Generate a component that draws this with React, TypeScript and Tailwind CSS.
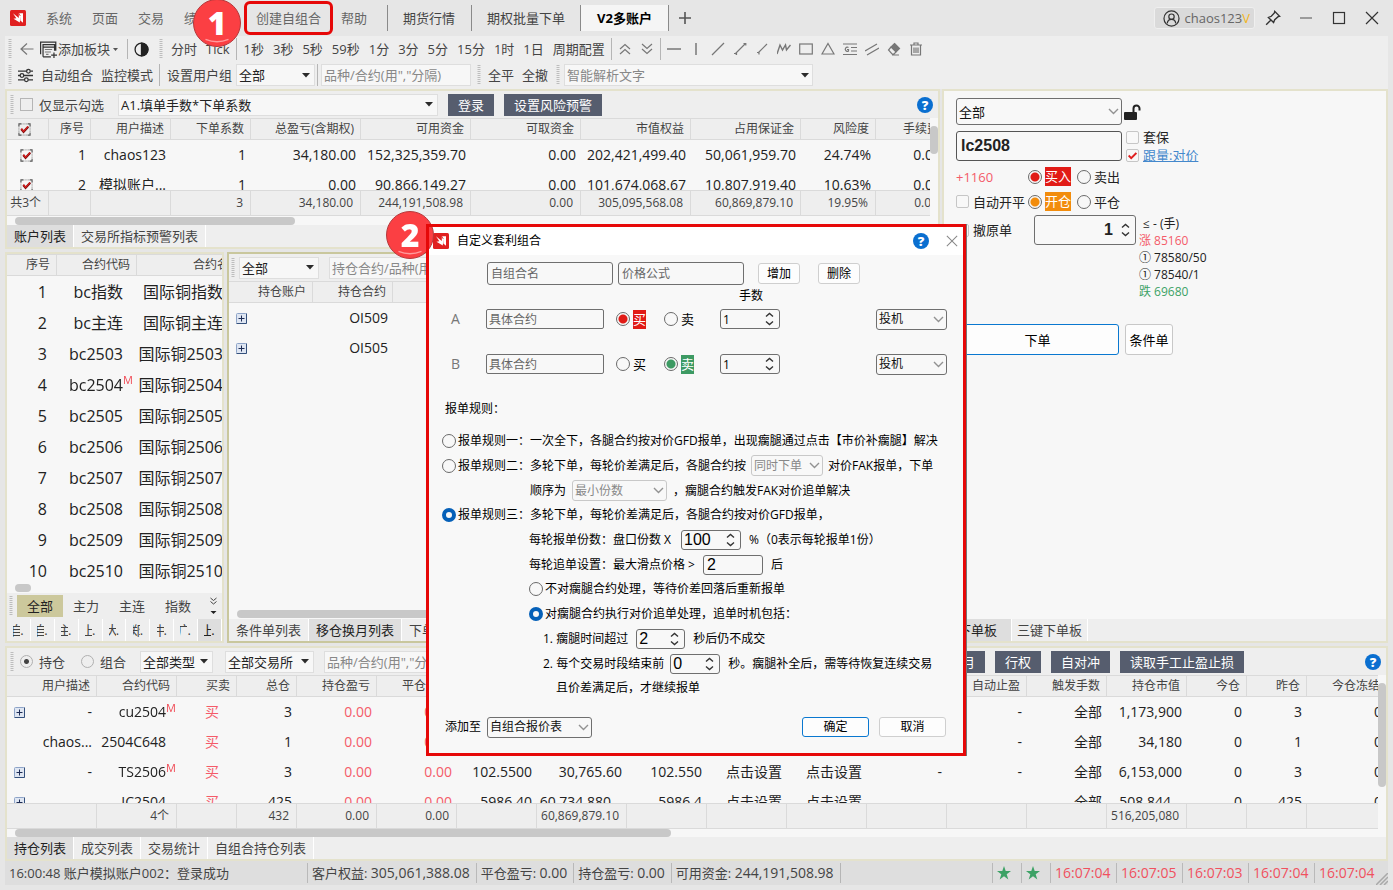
import type { ReactNode } from 'react'
import clsx from 'clsx'

/* ---------- small parts ---------- */

function Svg({ children, size = 14, className }: { children: ReactNode; size?: number; className?: string }) {
  return (
    <svg
      width={size}
      height={size}
      viewBox="0 0 14 14"
      fill="none"
      stroke="currentColor"
      strokeWidth="1.2"
      className={clsx('shrink-0', className)}
      aria-hidden="true"
    >
      {children}
    </svg>
  )
}

const Grip = () => (
  <svg width="4" height="20" viewBox="0 0 4 20" className="shrink-0" aria-hidden="true">
    <path d="M2 0V20" stroke="#bdbdbd" strokeWidth="3" strokeDasharray="1 1" />
  </svg>
)

const Sep = ({ className = 'h-[22px]' }: { className?: string }) => <span className={clsx('w-px shrink-0 bg-[#b5b5b5]', className)} />

const Caret = () => (
  <svg width="8" height="5" viewBox="0 0 8 5" className="pointer-events-none shrink-0" aria-hidden="true">
    <path d="M0 0H8L4 4.5Z" fill="#2b2b2b" />
  </svg>
)

const Logo = () => (
  <svg width="16" height="16" viewBox="0 0 16 16" className="shrink-0" aria-hidden="true">
    <rect width="16" height="16" rx="1.5" fill="#e02020" />
    <path d="M3 3.200L8.800 8V3.200H13V12.800L10.300 10.500V6L9.800 12.500L3.500 8.800L6.300 8.200Z" fill="#fff" />
    <path d="M8.800 3.200L10.300 6" stroke="#e02020" strokeWidth="0.8" />
  </svg>
)

const Help = () => (
  <button aria-label="帮助" className="flex h-4 w-4 shrink-0 items-center justify-center rounded-full bg-[#0a6fd0] text-[13px] leading-4 font-extrabold text-white">
    ?
  </button>
)

const PlusBox = () => (
  <svg width="11" height="11" viewBox="0 0 11 11" aria-hidden="true">
    <rect x="0.5" y="0.5" width="10" height="10" rx="1" fill="#dfe6f2" stroke="#8ea4c8" />
    <path d="M0.5 10.5H10.5V0.5" fill="none" stroke="#34507c" />
    <path d="M2.5 5.5H8.5M5.5 2.5V8.5" stroke="#1d2c55" />
  </svg>
)

interface ComboProps {
  label: string
  value: string
  className?: string
}

function Combo({ label, value, className }: ComboProps) {
  return (
    <div className={clsx('flex h-[22px] shrink-0 items-center border border-[#dedede] bg-[#f7f7f7] pr-1 text-[#222]', className)}>
      <select aria-label={label} className="h-full min-w-0 flex-1 appearance-none bg-transparent pl-0.5">
        <option>{value}</option>
      </select>
      <Caret />
    </div>
  )
}

function RoundCombo({ label, value, className, muted }: ComboProps & { muted?: boolean }) {
  return (
    <div
      className={clsx(
        'flex shrink-0 items-center rounded-[3px] border bg-[#f8f8f8] pr-0.5',
        muted ? 'border-[#c8c8c8] text-[#888]' : 'border-[#6f6f6f] text-[#111]',
        className,
      )}
    >
      <select aria-label={label} disabled={muted} className="h-full min-w-0 flex-1 appearance-none bg-transparent pl-0.5 opacity-100">
        <option>{value}</option>
      </select>
      <svg width="11" height="7" viewBox="0 0 11 7" className="pointer-events-none shrink-0" aria-hidden="true">
        <path d="M1 1L5.500 5.500L10 1" fill="none" stroke="#929292" strokeWidth="1.4" />
      </svg>
    </div>
  )
}

function Spin({ label, value, className, inputClass }: ComboProps & { inputClass?: string }) {
  return (
    <div className={clsx('flex shrink-0 items-center rounded-[3px] border border-[#6f6f6f] bg-[#f8f8f8]', className)}>
      <input aria-label={label} defaultValue={value} className={clsx('h-full min-w-0 flex-1 bg-transparent pl-0.5', inputClass)} />
      <svg width="9" height="14" viewBox="0 0 9 14" className="mr-[5px] shrink-0" aria-hidden="true">
        <path d="M1 4.500L4.500 1.500L8 4.500M1 9.500L4.500 12.500L8 9.500" fill="none" stroke="#333" strokeWidth="1.4" />
      </svg>
    </div>
  )
}

const radioDots = {
  red: 'checked:bg-[radial-gradient(circle,#e11b16_0_4px,transparent_5px)]',
  green: 'checked:bg-[radial-gradient(circle,#3d9a63_0_4px,transparent_5px)]',
  orange: 'checked:bg-[radial-gradient(circle,#f28c0c_0_4px,transparent_5px)]',
  gray: 'checked:bg-[radial-gradient(circle,#444_0_2px,transparent_3px)]',
  blue: 'checked:border-4 checked:border-[#0560b8]',
}

interface RadioProps {
  name: string
  children: ReactNode
  tone?: keyof typeof radioDots
  checked?: boolean
  soft?: boolean
  className?: string
}

function Radio({ name, children, tone = 'blue', checked, soft, className = 'gap-0.5' }: RadioProps) {
  return (
    <label className={clsx('flex shrink-0 items-center', className)}>
      <input
        type="radio"
        name={name}
        defaultChecked={checked}
        className={clsx('shrink-0 appearance-none rounded-full border', soft ? 'h-[13px] w-[13px] border-[#b0b0b0]' : 'h-3.5 w-3.5 border-[#6a6a6a]', radioDots[tone])}
      />
      {children}
    </label>
  )
}

function Check({ children, checked, className }: { children: ReactNode; checked?: boolean; className?: string }) {
  return (
    <label className={clsx('flex shrink-0 items-center gap-1', className)}>
      <span className="grid place-items-center">
        <input type="checkbox" defaultChecked={checked} className="col-start-1 row-start-1 h-[13px] w-[13px] appearance-none rounded-[2px] border border-[#c6c6c6] bg-[#f8f8f8]" />
        {checked && (
          <Svg size={9} className="pointer-events-none col-start-1 row-start-1 text-[#e02020]">
            <path d="M1 7L5 11L13 3" strokeWidth="3" />
          </Svg>
        )}
      </span>
      {children}
    </label>
  )
}

function RowCheck({ label }: { label: string }) {
  return (
    <span className="grid h-[13px] place-items-center">
      <input type="checkbox" aria-label={label} defaultChecked className="col-start-1 row-start-1 h-[13px] w-[13px] appearance-none" />
      <Svg size={13} className="pointer-events-none col-start-1 row-start-1 text-[#555]">
        <path d="M1 3.500V1H3.500M10.500 1H13V3.500M13 10.500V13H10.500M3.500 13H1V10.500" />
        <path d="M3 1H11M3 13H11M1 3V11M13 3V11" strokeDasharray="1 1" strokeWidth="0.8" />
        <path d="M3.500 6.500L6 9.500L11 4" stroke="#7a0d0d" strokeWidth="2.4" />
        <path d="M3.500 6L6 9L11 3.500" stroke="#e02020" strokeWidth="1.200" />
      </Svg>
    </span>
  )
}

const DarkButton = ({ children }: { children: ReactNode }) => (
  <button className="h-[22px] shrink-0 bg-[#565d6e] px-2.5 text-white">{children}</button>
)

function Tabs({ items, active }: { items: string[]; active: number }) {
  return (
    <div className="flex h-[22px] shrink-0 overflow-hidden bg-[#eeeeee]">
      {items.map((t, i) => (
        <button key={t} className={clsx('shrink-0 border-r border-white px-[7px]', i === active ? 'bg-[#dedede] text-[#222]' : 'text-[#444]')}>
          {t}
        </button>
      ))}
    </div>
  )
}

/* ---------- data grid ---------- */

interface Column {
  title: string
  width: number
  cell?: string
}

interface GridProps {
  cols: Column[]
  rows: ReactNode[][]
  foot?: string[]
  rowClass?: string
}

function Grid({ cols, rows, foot, rowClass = 'h-[30px] text-sm' }: GridProps) {
  const total = cols.reduce((sum, c) => sum + c.width, 0)
  return (
    <div className="min-w-0 flex-1 overflow-hidden">
      <table className="table-fixed border-separate border-spacing-0 whitespace-nowrap" style={{ width: total }}>
        <colgroup>
          {cols.map((c, i) => (
            <col key={i} style={{ width: c.width }} />
          ))}
        </colgroup>
        <thead className="sticky top-0 text-xs text-[#444]">
          <tr className="h-[22px]">
            {cols.map((c, i) => (
              <th key={i} className="border-y border-r border-[#dadada] bg-[#eeeeee] p-0 pr-1.5 text-right leading-4 font-normal">
                {c.title === '☑' ? <RowCheck label="全选" /> : c.title}
              </th>
            ))}
          </tr>
        </thead>
        <tbody className="text-[#222]">
          {rows.map((r, i) => (
            <tr key={i} className={rowClass}>
              {r.map((v, j) => (
                <td key={j} className={clsx('p-0 text-right leading-5', cols[j].cell ?? 'pr-[5px]')}>
                  {v}
                </td>
              ))}
            </tr>
          ))}
        </tbody>
        {foot && (
          <tfoot className="sticky bottom-0 text-xs text-[#444]">
            <tr className="h-[26px]">
              {foot.map((v, i) => (
                <td key={i} className="border-y border-r border-[#dadada] bg-[#eeeeee] p-0 pr-[7px] text-right leading-4">
                  {v}
                </td>
              ))}
            </tr>
          </tfoot>
        )}
      </table>
    </div>
  )
}

const Main = ({ children }: { children: string }) => (
  <span className="relative">
    {children}
    <sup className="absolute top-0 left-full text-[11px] leading-3 text-[#f04a55]">M</sup>
  </span>
)

const Red = ({ children }: { children: string }) => <span className="text-[#f45b69]">{children}</span>

const accountCols: Column[] = [
  { title: '☑', width: 42, cell: 'pr-1' },
  { title: '序号', width: 42 },
  { title: '用户描述', width: 80 },
  { title: '下单系数', width: 80 },
  { title: '总盈亏(含期权)', width: 110 },
  { title: '可用资金', width: 110 },
  { title: '可取资金', width: 110 },
  { title: '市值权益', width: 110 },
  { title: '占用保证金', width: 110 },
  { title: '风险度', width: 75 },
  { title: '手续费', width: 70 },
]

const accountRows: ReactNode[][] = [
  [<RowCheck label="chaos123" />, '1', 'chaos123', '1', '34,180.00', '152,325,359.70', '0.00', '202,421,499.40', '50,061,959.70', '24.74%', '0.00'],
  [<RowCheck label="模拟账户" />, '2', '模拟账户...', '1', '0.00', '90,866,149.27', '0.00', '101,674,068.67', '10,807,919.40', '10.63%', '0.00'],
]

const accountFoot = ['共3个', '', '', '3', '34,180.00', '244,191,508.98', '0.00', '305,095,568.08', '60,869,879.10', '19.95%', '0.00']

const contractCols: Column[] = [
  { title: '序号', width: 50, cell: 'pr-2.5' },
  { title: '合约代码', width: 80, cell: 'pr-3.5' },
  { title: '合约名称', width: 111, cell: 'pr-[25px]' },
]

const contractRows: ReactNode[][] = ['指数', '主连', '2503', '2504', '2505', '2506', '2507', '2508', '2509', '2510'].map((s, i) => [
  i + 1,
  s === '2504' ? <Main>{`bc${s}`}</Main> : `bc${s}`,
  `国际铜${s}`,
])

const moveCols: Column[] = [
  { title: '持仓账户', width: 84, cell: 'text-left pl-[7px]' },
  { title: '持仓合约', width: 80 },
  { title: '', width: 600 },
]

const positionCols: Column[] = [
  { title: '用户描述', width: 90 },
  { title: '合约代码', width: 80, cell: 'pr-[11px]' },
  { title: '买卖', width: 60, cell: 'pr-[18px]' },
  { title: '总仓', width: 60 },
  { title: '持仓盈亏', width: 80 },
  { title: '平仓盈亏', width: 80 },
  { title: '持仓均价', width: 80 },
  { title: '占用保证金', width: 90 },
  { title: '最新价', width: 80 },
  { title: '止损', width: 80 },
  { title: '止盈', width: 80 },
  { title: '自动止损', width: 80 },
  { title: '自动止盈', width: 80 },
  { title: '触发手数', width: 80 },
  { title: '持仓市值', width: 80 },
  { title: '今仓', width: 60 },
  { title: '昨仓', width: 60 },
  { title: '今仓冻结', width: 80 },
]

const Owner = ({ children, plus }: { children: string; plus?: boolean }) => (
  <span className="flex items-center justify-between pl-[7px]">
    <span>{plus && <PlusBox />}</span>
    <span>{children}</span>
  </span>
)

const buy = <Red>买</Red>
const zero = <Red>0.00</Red>
const setUp = '点击设置'

const positionRows: ReactNode[][] = [
  [<Owner plus>-</Owner>, <Main>cu2504</Main>, buy, '3', zero, zero, '', '', '', setUp, setUp, '-', '-', '全部', '1,173,900', '0', '3', '0'],
  [<Owner>chaos...</Owner>, '2504C648', buy, '1', zero, zero, '', '', '', setUp, setUp, '-', '-', '全部', '34,180', '0', '1', '0'],
  [<Owner plus>-</Owner>, <Main>TS2506</Main>, buy, '3', zero, zero, '102.5500', '30,765.60', '102.550', setUp, setUp, '-', '-', '全部', '6,153,000', '0', '3', '0'],
  [<Owner plus> </Owner>, 'IC2504', buy, '425', zero, zero, '5986.40', '60,734,880...', '5986.4', setUp, setUp, '', '', '全部', '508,844...', '0', '425', '0'],
]

const positionFoot = ['', '4个', '', '432', '0.00', '0.00', '', '60,869,879.10', '', '', '', '', '', '', '516,205,080', '', '', '']

/* ---------- title bar and toolbars ---------- */

function Badge({ children, className }: { children: string; className: string }) {
  return (
    <span
      className={clsx(
        'absolute flex h-12 w-12 items-center justify-center rounded-full border border-[#b5383b] bg-[#fb3f43] text-[32px] leading-none font-extrabold text-white',
        className,
      )}
    >
      {children}
      <svg viewBox="0 0 48 48" className="absolute inset-0" aria-hidden="true">
        <path d="M12 41Q24 46 36 41" fill="none" stroke="#ff9a9c" strokeWidth="1.5" />
      </svg>
    </span>
  )
}

function TitleBar() {
  return (
    <header className="relative flex h-9 shrink-0 items-center pr-[5px] pl-2.5 text-[#666]">
      <Logo />
      <nav className="flex items-center gap-5 pl-5 leading-5">
        <button>系统</button>
        <button>页面</button>
        <button>交易</button>
        <button className="w-[52px] text-left">绩</button>
        <button className="relative">
          创建自组合
          <span className="absolute -inset-x-3 -inset-y-[7px] rounded-md border-[3px] border-[#e60808]" />
        </button>
        <button>帮助</button>
      </nav>
      <div className="ml-5 flex h-[26px] text-[#444]">
        <button className="border-l border-[#8a8a8a] pr-4 pl-[15px]">期货行情</button>
        <button className="border-x border-[#8a8a8a] px-[15px]">期权批量下单</button>
        <button className="border-r border-[#8a8a8a] bg-[#f5f5f5] px-4 font-bold text-black">V2多账户</button>
        <button aria-label="新建页面" className="pl-[9px] text-[#555]">
          <Svg>
            <path d="M7 1V13M1 7H13" strokeWidth="1.6" />
          </Svg>
        </button>
      </div>
      <div className="ml-auto flex items-center text-[#333]">
        <button className="flex h-[22px] items-center gap-1 rounded-[3px] border border-[#efefef] bg-[#dadada] pr-1 pl-2 text-[#666]">
          <Svg size={17} className="text-[#333]">
            <circle cx="7" cy="7" r="6.200" strokeWidth="1" />
            <circle cx="7" cy="5.500" r="2.200" strokeWidth="1" />
            <path d="M3.500 11C3.800 8.800 5.300 7.800 7 7.800S10.200 8.800 10.500 11" strokeWidth="1" />
          </Svg>
          <span>
            chaos123<span className="text-[#f2b61c]">V</span>
          </span>
        </button>
        <button aria-label="置顶" className="ml-2.5">
          <Svg size={16}>
            <path d="M1 13L5 9M3 6.500L7.500 11L8.500 8.500L11.500 5.800L12.800 5.500L8.500 1.200L8.200 2.500L5.500 5.500Z" />
          </Svg>
        </button>
        <button aria-label="最小化" className="ml-[18px]">
          <Svg className="text-[#888]">
            <path d="M1 7H13" strokeWidth="1.600" />
          </Svg>
        </button>
        <button aria-label="最大化" className="ml-[19px]">
          <Svg>
            <rect x="1.500" y="1.500" width="11" height="11" />
          </Svg>
        </button>
        <button aria-label="关闭" className="mr-[9px] ml-[19px]">
          <Svg>
            <path d="M1 1L13 13M13 1L1 13" />
          </Svg>
        </button>
      </div>
      <Badge className="-top-px left-[193px]">1</Badge>
    </header>
  )
}

const drawTools: { name: string; icon: ReactNode }[] = [
  { name: '水平线', icon: <path d="M0 7H14" strokeWidth="1.500" /> },
  { name: '垂直线', icon: <path d="M7 1V13" strokeWidth="1.500" /> },
  { name: '直线', icon: <path d="M1 13L13 1" /> },
  { name: '线段', icon: <path d="M2 12L12 2M1 11.500H3.500V13M10.500 1.500H12.800V3.500" /> },
  { name: '射线', icon: <path d="M3 11L12 2M2 10.500H4V12.500" /> },
  { name: '波浪线', icon: <path d="M0 12L3 3L5.500 8L8.500 3L9.500 8L13.500 3" strokeWidth="1.400" /> },
  { name: '矩形', icon: <rect x="0.700" y="2" width="12.600" height="10" /> },
  { name: '三角形', icon: <path d="M7 1.500L13 12H1Z" /> },
  { name: '黄金分割', icon: <path d="M0 2H14M0 12.500H14M8 5.500H14M8 9H14M5.500 5.500A2 2.200 0 1 0 5.500 9V7.500H4" /> },
  { name: '平行线', icon: <path d="M0 9L12 2M2 13L14 6" /> },
  {
    name: '橡皮',
    icon: (
      <>
        <path d="M7.500 1.500L12.500 6.500L9 10L4 5Z" fill="currentColor" />
        <path d="M4 5L1.500 8L5 12H7L9 10M5 13H12" />
      </>
    ),
  },
  { name: '删除', icon: <path d="M1 3H13M5 3V1H9V3M2.500 3V13H11.500V3M5 5.500V11M7 5.500V11M9 5.500V11" /> },
]

function Toolbars() {
  return (
    <div className="mx-[5px] shrink-0 bg-[#eeeeee] pb-px pl-[3px] text-[#444]">
      <div className="flex h-[26px] items-center">
        <Grip />
        <button aria-label="返回" className="ml-2 text-[#777]">
          <Svg>
            <path d="M13.500 7H1M7 1.500L1 7L7 12.500" />
          </Svg>
        </button>
        <button className="ml-1.5 flex items-center">
          <Svg size={17} className="mr-[1px] text-[#333]">
            <path d="M0.500 11V1H13V8M2.500 13V3H12V8M2.500 5H12M2.500 13H9M11.500 9.500V14M9.200 11.700H14" strokeWidth="1" />
            <path d="M4 7H10M4 9H9M5 11H7" strokeWidth="0.900" stroke="#777" />
          </Svg>
          添加板块
          <svg width="5" height="3" viewBox="0 0 5 3" className="ml-[3px]" aria-hidden="true">
            <path d="M0 0H5L2.500 3Z" fill="#555" />
          </svg>
        </button>
        <Sep className="ml-[9px] h-5" />
        <button aria-label="配色" className="ml-1.5">
          <Svg size={15} className="text-[#222]">
            <circle cx="7" cy="7" r="6" />
            <path d="M7 1A6 6 0 0 1 7 13Z" fill="currentColor" />
          </Svg>
        </button>
        <span className="ml-2.5">
          <Grip />
        </span>
        <div className="ml-2 flex items-center gap-[9px]">
          <button>分时</button>
          <button>Tick</button>
        </div>
        <Sep className="ml-1.5 h-[22px]" />
        <div className="ml-[7px] flex items-center gap-[9px]">
          {['1秒', '3秒', '5秒', '59秒', '1分', '3分', '5分', '15分', '1时', '1日', '周期配置'].map((t) => (
            <button key={t}>{t}</button>
          ))}
        </div>
        <Sep className="ml-1.5 h-[22px]" />
        <div className="mx-0.5 flex text-[#777]">
          <button aria-label="向上" className="flex w-[22px] justify-center">
            <Svg>
              <path d="M2 7L7 2.500L12 7M2 12L7 7.500L12 12" />
            </Svg>
          </button>
          <button aria-label="向下" className="flex w-[22px] justify-center">
            <Svg>
              <path d="M2 2L7 6.500L12 2M2 7L7 11.500L12 7" />
            </Svg>
          </button>
        </div>
        <Sep />
        <div className="ml-0.5 flex text-[#777]">
          {drawTools.map((t) => (
            <button key={t.name} aria-label={t.name} className="flex w-[22px] justify-center">
              <Svg>{t.icon}</Svg>
            </button>
          ))}
        </div>
      </div>
      <div className="flex h-[26px] items-center">
        <Grip />
        <button className="ml-1.5 flex items-center gap-2">
          <Svg size={15} className="text-[#333]">
            <path d="M0 3H8M11.500 3H14M0 7H2M5.500 7H14M0 11H6M9.500 11H14" />
            <circle cx="9.700" cy="3" r="1.700" />
            <circle cx="3.700" cy="7" r="1.700" />
            <circle cx="7.800" cy="11" r="1.700" />
          </Svg>
          自动组合
        </button>
        <button className="ml-2">监控模式</button>
        <Sep className="ml-1.5 h-[22px]" />
        <span className="ml-[7px]">设置用户组</span>
        <Combo label="用户组" value="全部" className="ml-1 w-[79px]" />
        <Sep className="ml-0.5 h-[22px]" />
        <input aria-label="品种合约" placeholder={'品种/合约(用","分隔)'} className="ml-[3px] h-[22px] w-[150px] border border-[#dedede] bg-[#f7f7f7] pl-0.5 placeholder:text-[#888]" />
        <span className="ml-1.5">
          <Grip />
        </span>
        <button className="ml-[7px]">全平</button>
        <button className="ml-2">全撤</button>
        <span className="mr-1 ml-2">
          <Grip />
        </span>
        <div className="flex h-[22px] w-[249px] items-center border border-[#dedede] bg-[#f7f7f7] pr-[3px]">
          <input aria-label="智能解析文字" placeholder="智能解析文字" className="min-w-0 flex-1 bg-transparent pl-0.5 placeholder:text-[#888]" />
          <Caret />
        </div>
      </div>
    </div>
  )
}

/* ---------- panels ---------- */

function AccountPanel() {
  return (
    <section className="flex shrink-0 flex-col overflow-hidden border-2 border-[#e4e2cc] bg-[#f7f7f7]">
      <div className="flex h-[27px] items-center bg-[#eeeeee] pr-[5px] pl-[3px] text-[#444]">
        <Grip />
        <label className="ml-1.5 flex items-center gap-1.5">
          <input type="checkbox" className="h-[13px] w-[13px] appearance-none border border-[#b5b5b5]" />
          仅显示勾选
        </label>
        <Combo label="下单方式" value="A1.填单手数*下单系数" className="ml-3.5 w-[320px]" />
        <div className="ml-2.5 flex gap-2.5">
          <DarkButton>登录</DarkButton>
          <DarkButton>设置风险预警</DarkButton>
        </div>
        <span className="ml-auto">
          <Help />
        </span>
      </div>
      <div className="flex h-[98px] bg-[#f7f7f7]">
        <Grid cols={accountCols} rows={accountRows} foot={accountFoot} />
        <div className="w-2 bg-[#f7f7f7] pt-2">
          <div className="h-7 rounded-full bg-[#c8c8c8]" />
        </div>
      </div>
      <div className="h-[9px] px-2 pt-px">
        <div className="h-2 w-[280px] rounded-full bg-[#c8c8c8]" />
      </div>
      <Tabs items={['账户列表', '交易所指标预警列表']} active={0} />
    </section>
  )
}

function ContractPanel() {
  return (
    <section className="flex w-[219px] shrink-0 flex-col border-2 border-[#e4e2cc] bg-[#f7f7f7]">
      <div className="flex min-h-0 flex-1">
        <Grid cols={contractCols} rows={contractRows} rowClass="h-[31px] text-base" />
      </div>
      <div className="h-[9px] px-2">
        <div className="h-2 w-4 rounded-full bg-[#c8c8c8]" />
      </div>
      <div className="flex h-[26px] items-center bg-[#eeeeee] pl-0.5 text-[#444]">
        <Grip />
        <div className="ml-1 flex flex-1">
          {['全部', '主力', '主连', '指数'].map((t, i) => (
            <button key={t} className={clsx('h-[22px] w-[46px]', i === 0 && 'bg-[#ccc89c] text-[#222]')}>
              {t}
            </button>
          ))}
        </div>
        <button aria-label="更多" className="mr-1">
          <svg width="9" height="18" viewBox="0 0 9 18" fill="none" stroke="#444" aria-hidden="true">
            <path d="M1.500 1L4.500 3.500L7.500 1M1.500 4.500L4.500 7L7.500 4.500" />
            <path d="M1.500 14H7.500L4.500 17Z" fill="#222" stroke="none" />
          </svg>
        </button>
      </div>
      <div className="flex h-[22px] bg-[#eeeeee] text-[#444]">
        {['自', '自', '主', '上', '大', '郑', '中', '广', '上'].map((t, i) => (
          <button key={i} className={clsx('flex flex-1 items-center justify-center border-r border-white', i === 8 && 'bg-[#dedede] text-[#222]')}>
            <span className="flex w-[7px] justify-center overflow-hidden">
              <span>{t}</span>
            </span>
            .
          </button>
        ))}
      </div>
    </section>
  )
}

function MovePanel() {
  return (
    <section className="flex min-w-0 flex-1 flex-col border-2 border-[#c9c79d] bg-[#f7f7f7]">
      <div className="flex h-[27px] items-center bg-[#eeeeee] pl-0.5">
        <Grip />
        <Combo label="账户" value="全部" className="ml-1 w-20" />
        <input aria-label="持仓合约" placeholder={'持仓合约/品种(用","分隔)'} className="ml-2.5 h-[22px] w-[170px] border border-[#dedede] bg-[#f7f7f7] pl-0.5 placeholder:text-[#888]" />
      </div>
      <div className="flex min-h-0 flex-1">
        <Grid
          cols={moveCols}
          rows={[
            [<PlusBox />, 'OI509', ''],
            [<PlusBox />, 'OI505', ''],
          ]}
        />
      </div>
      <div className="h-[9px] px-2">
        <div className="h-2 rounded-full bg-[#c8c8c8]" />
      </div>
      <Tabs items={['条件单列表', '移仓换月列表', '下单列表']} active={1} />
    </section>
  )
}

function OrderPanel() {
  return (
    <section className="flex w-[446px] shrink-0 flex-col border-2 border-[#e4e2cc] bg-[#f7f7f7] text-[#222]">
      <div className="flex-1 pt-[7px] pl-3">
        <div className="flex items-center gap-0.5">
          <RoundCombo label="账户" value="全部" className="h-[27px] w-[166px]" />
          <svg width="17" height="16" viewBox="0 0 17 16" aria-label="未锁定">
            <rect x="0" y="8" width="13" height="8" rx="1" fill="#222" />
            <path d="M9.500 8V4.500A3 3 0 0 1 15.500 4.500V6.500" fill="none" stroke="#222" strokeWidth="2" />
          </svg>
        </div>
        <div className="mt-[3px] flex items-center gap-1">
          <input aria-label="合约" defaultValue="lc2508" className="h-[30px] w-[166px] rounded-[3px] border border-[#555] bg-[#f8f8f8] pl-1 font-['Liberation_Sans',sans-serif] text-base font-bold" />
          <div className="flex flex-col leading-[18px]">
            <Check>套保</Check>
            <Check checked>
              <a href="#price" className="text-[#4488cc] underline">
                跟量:对价
              </a>
            </Check>
          </div>
        </div>
        <div className="flex h-[25px] items-center">
          <span className="w-[72px] text-[#f45b69]">+1160</span>
          <Radio name="side" tone="red" checked className="gap-[3px]">
            <span className="bg-[#e11b16] leading-[19px] text-white">买入</span>
          </Radio>
          <Radio name="side" className="ml-1.5 gap-[3px]">
            卖出
          </Radio>
        </div>
        <div className="flex h-[25px] items-center">
          <Check className="w-[72px]">自动开平</Check>
          <Radio name="offset" tone="orange" checked className="gap-[3px]">
            <span className="bg-[#f28c0c] leading-[19px] text-white">开仓</span>
          </Radio>
          <Radio name="offset" className="ml-1.5 gap-[3px]">
            平仓
          </Radio>
        </div>
        <div className="flex pt-px">
          <Check className="h-[30px] w-[78px]">撤原单</Check>
          <Spin label="手数" value="1" className="h-[30px] w-[102px]" inputClass="pr-2 text-right font-['Liberation_Sans',sans-serif] text-base font-bold" />
          <div className="ml-[3px] text-xs leading-[17px]">
            <p className="pl-1">≤ - (手)</p>
            <p className="text-[#f45b69]">涨 85160</p>
            <p>① 78580/50</p>
            <p>① 78540/1</p>
            <p className="text-[#3da266]">跌 69680</p>
          </div>
        </div>
        <div className="mt-6 flex gap-1.5">
          <button className="h-[31px] w-[163px] rounded-[3px] border border-[#0a78d0] bg-[#fdfdfd] text-black">下单</button>
          <button className="h-[31px] w-12 rounded-[3px] border border-[#c8c8c8] bg-[#fdfdfd] text-black">条件单</button>
        </div>
      </div>
      <div className="flex h-[22px] bg-[#eeeeee]">
        <button className="border-r border-white bg-[#dedede] px-3.5">下单板</button>
        <button className="border-r border-white px-[5px] text-[#444]">三键下单板</button>
      </div>
    </section>
  )
}

function PositionPanel() {
  return (
    <section className="mx-[5px] flex shrink-0 flex-col border-2 border-[#e4e2cc] bg-[#f7f7f7]">
      <div className="flex h-[27px] items-center bg-[#eeeeee] pr-[5px] pl-[3px] text-[#444]">
        <Grip />
        <Radio name="view" tone="gray" soft checked className="ml-1.5 gap-1.5">
          持仓
        </Radio>
        <Radio name="view" tone="gray" soft className="ml-4 gap-1.5">
          组合
        </Radio>
        <Combo label="类型" value="全部类型" className="ml-3.5 w-[73px]" />
        <Combo label="交易所" value="全部交易所" className="ml-3 w-[89px]" />
        <input aria-label="品种合约" placeholder={'品种/合约(用","分隔)'} className="ml-2.5 h-[22px] w-[150px] border border-[#dedede] bg-[#f7f7f7] pl-0.5 placeholder:text-[#888]" />
        <div className="mr-[121px] ml-auto flex gap-2.5">
          <DarkButton>移仓换月</DarkButton>
          <DarkButton>行权</DarkButton>
          <DarkButton>自对冲</DarkButton>
          <DarkButton>读取手工止盈止损</DarkButton>
        </div>
        <Help />
      </div>
      <div className="flex h-[154px]">
        <Grid cols={positionCols} rows={positionRows} foot={positionFoot} />
        <div className="w-2 pt-2">
          <div className="h-[104px] rounded-full bg-[#c8c8c8]" />
        </div>
      </div>
      <div className="h-2 px-2">
        <div className="h-2 w-[656px] rounded-full bg-[#c8c8c8]" />
      </div>
      <Tabs items={['持仓列表', '成交列表', '交易统计', '自组合持仓列表']} active={0} />
    </section>
  )
}

function StatusBar() {
  const totals = [
    ['客户权益', '305,061,388.08'],
    ['平仓盈亏', '0.00'],
    ['持仓盈亏', '0.00'],
    ['可用资金', '244,191,508.98'],
  ]
  return (
    <footer className="mx-[5px] mb-[5px] flex h-6 shrink-0 items-center bg-[#dedede] pl-1 text-[#444]">
      <span className="w-[298px] whitespace-nowrap">16:00:48 账户模拟账户002：登录成功</span>
      {totals.map(([k, v]) => (
        <span key={k} className="flex h-5 items-center border-l border-[#b9b9b9] pr-1.5 pl-1 whitespace-nowrap">
          {k}:&nbsp;<span className="text-sm">{v}</span>
        </span>
      ))}
      <Sep className="h-5" />
      <div className="ml-auto flex h-5 items-center text-sm text-[#f0515e]">
        {[0, 1].map((i) => (
          <span key={i} className="flex h-5 w-[29px] items-center border-l border-[#b9b9b9] pl-1">
            <svg width="14" height="14" viewBox="0 0 14 14" aria-hidden="true">
              <polygon points="7,0 8.700,5 14,5 9.700,8.200 11.300,13.500 7,10.300 2.700,13.500 4.300,8.200 0,5 5.300,5" fill="#3da266" />
            </svg>
          </span>
        ))}
        {['16:07:04', '16:07:05', '16:07:03', '16:07:04', '16:07:04'].map((t, i) => (
          <span key={i} className="flex h-5 w-[66px] items-center border-l border-[#b9b9b9] pl-1">
            {t}
          </span>
        ))}
      </div>
      <svg width="12" height="12" viewBox="0 0 12 12" className="-ml-1 self-end" aria-hidden="true">
        <path d="M0 12L12 0M4 12L12 4M8 12L12 8" stroke="#a9a9a9" strokeWidth="1.500" />
      </svg>
    </footer>
  )
}

/* ---------- spread dialog ---------- */

function Leg({ id, side }: { id: string; side: 'buy' | 'sell' }) {
  return (
    <div className="flex h-6 items-center pr-4 pl-[22px]">
      <span className="w-[35px] text-sm text-[#777]">{id}</span>
      <input aria-label={`合约${id}`} placeholder="具体合约" className="h-5 w-[118px] rounded-[2px] border border-[#6f6f6f] pl-0.5 placeholder:text-[#666]" />
      <Radio name={`leg${id}`} tone="red" checked={side === 'buy'} className="ml-3 gap-[3px]">
        <span className={clsx('text-[13px] leading-[19px]', side === 'buy' && 'bg-[#e11b16] text-white')}>买</span>
      </Radio>
      <Radio name={`leg${id}`} tone="green" checked={side === 'sell'} className="ml-[18px] gap-[3px]">
        <span className={clsx('text-[13px] leading-[19px]', side === 'sell' && 'bg-[#3d9a63] text-white')}>卖</span>
      </Radio>
      <Spin label={`手数${id}`} value="1" className="ml-[26px] h-5 w-[60px]" />
      <RoundCombo label={`投保${id}`} value="投机" className="ml-auto h-[21px] w-[71px]" />
    </div>
  )
}

const bigDigits = "font-['Liberation_Sans',sans-serif] text-base"

function SpreadDialog() {
  return (
    <div className="absolute top-[224px] left-[426px] w-[541px] border-r border-[#777] text-xs text-black">
      <section role="dialog" aria-label="自定义套利组合" className="bg-[#f8f8f8] p-[3px]">
        <div className="flex h-[28px] items-center bg-white pl-1">
          <Logo />
          <h2 className="ml-2">自定义套利组合</h2>
          <span className="ml-auto">
            <Help />
          </span>
          <button aria-label="关闭" className="mr-[5px] ml-[17px] text-[#888]">
            <Svg size={12}>
              <path d="M1 1L13 13M13 1L1 13" />
            </Svg>
          </button>
        </div>
        <div className="flex items-center pt-[7px] pl-[58px]">
          <input aria-label="自组合名" placeholder="自组合名" className="h-[23px] w-[126px] rounded-[3px] border border-[#6f6f6f] pl-[3px] placeholder:text-[#666]" />
          <input aria-label="价格公式" placeholder="价格公式" className="ml-[5px] h-[23px] w-[126px] rounded-[3px] border border-[#6f6f6f] pl-[3px] placeholder:text-[#666]" />
          <button className="ml-3.5 h-[21px] w-[42px] rounded-[3px] border border-[#cfcfcf] bg-[#fdfdfd]">增加</button>
          <button className="ml-[18px] h-[21px] w-[42px] rounded-[3px] border border-[#cfcfcf] bg-[#fdfdfd]">删除</button>
        </div>
        <p className="pl-[310px] leading-[22px]">手数</p>
        <Leg id="A" side="buy" />
        <div className="h-[21px]" />
        <Leg id="B" side="sell" />
        <p className="mt-5 pl-4 leading-[26px]">报单规则：</p>

        <div className="mt-[7px] pl-[13px] whitespace-nowrap">
          <div className="flex h-6 items-center">
            <Radio name="rule">报单规则一：一次全下，各腿合约按对价GFD报单，出现瘸腿通过点击【市价补瘸腿】解决</Radio>
          </div>
          <div className="flex h-[25px] items-center">
            <Radio name="rule">报单规则二：多轮下单，每轮价差满足后，各腿合约按</Radio>
            <RoundCombo label="下单方式" value="同时下单" muted className="mx-[5px] h-[21px] w-[72px]" />
            对价FAK报单，下单
          </div>
          <div className="flex h-[25px] items-center pl-[88px]">
            顺序为
            <RoundCombo label="下单顺序" value="最小份数" muted className="mx-1.5 h-[21px] w-[95px]" />
            ，瘸腿合约触发FAK对价追单解决
          </div>
          <div className="flex h-6 items-center">
            <Radio name="rule" checked>
              报单规则三：多轮下单，每轮价差满足后，各腿合约按对价GFD报单，
            </Radio>
          </div>
          <div className="pl-[87px]">
            <div className="flex h-[25px] items-center">
              每轮报单份数：盘口份数 X
              <Spin label="盘口份数" value="100" className="mr-2 ml-2.5 h-5 w-[60px]" inputClass={bigDigits} />
              %（0表示每轮报单1份）
            </div>
            <div className="flex h-[25px] items-center">
              每轮追单设置：最大滑点价格 &gt;
              <input aria-label="最大滑点价格" defaultValue="2" className={clsx('mr-2 ml-2 h-5 w-[60px] rounded-[3px] border border-[#6f6f6f] pl-[3px]', bigDigits)} />
              后
            </div>
            <div className="flex h-6 items-center">
              <Radio name="leg-rule">不对瘸腿合约处理，等待价差回落后重新报单</Radio>
            </div>
            <div className="flex h-[25px] items-center">
              <Radio name="leg-rule" checked>
                对瘸腿合约执行对价追单处理，追单时机包括：
              </Radio>
            </div>
            <div className="flex h-[25px] items-center pl-3.5">
              1. 瘸腿时间超过
              <Spin label="超时秒数" value="2" className="mx-2 h-5 w-[49px]" inputClass={bigDigits} />
              秒后仍不成交
            </div>
            <div className="flex h-[25px] items-center pl-3.5">
              2. 每个交易时段结束前
              <Spin label="结束前秒数" value="0" className="mr-2 ml-1.5 h-5 w-[50px]" inputClass={bigDigits} />
              秒。瘸腿补全后，需等待恢复连续交易
            </div>
            <div className="flex h-6 items-center pl-[27px]">且价差满足后，才继续报单</div>
          </div>
        </div>

        <div className="mt-[15px] flex h-6 items-center pr-[17px] pl-4">
          添加至
          <RoundCombo label="添加至" value="自组合报价表" className="ml-1.5 h-[21px] w-[105px]" />
          <button className="ml-auto h-5 w-[67px] rounded-[3px] border border-[#0a78d0] bg-[#fdfdfd]">确定</button>
          <button className="ml-2.5 h-5 w-[67px] rounded-[3px] border border-[#cfcfcf] bg-[#fdfdfd]">取消</button>
        </div>
        <div className="h-3.5" />
      </section>
      <Badge className="-top-[13px] -left-10">2</Badge>
      <div className="pointer-events-none absolute inset-0 border-[3px] border-[#e60808]" />
    </div>
  )
}

export default function App() {
  return (
    <div className="relative flex h-screen flex-col overflow-hidden bg-[#e6e6e6] font-['Open_Sans','Noto_Sans_CJK_SC',sans-serif] text-[13px] leading-5 whitespace-nowrap">
      <TitleBar />
      <Toolbars />
      <main className="mx-[5px] mb-[3px] flex min-h-0 flex-1 gap-0.5">
        <div className="flex min-w-0 flex-1 flex-col gap-[3px]">
          <AccountPanel />
          <div className="flex min-h-0 flex-1 gap-[3px]">
            <ContractPanel />
            <MovePanel />
          </div>
        </div>
        <OrderPanel />
      </main>
      <PositionPanel />
      <StatusBar />
      <SpreadDialog />
    </div>
  )
}
